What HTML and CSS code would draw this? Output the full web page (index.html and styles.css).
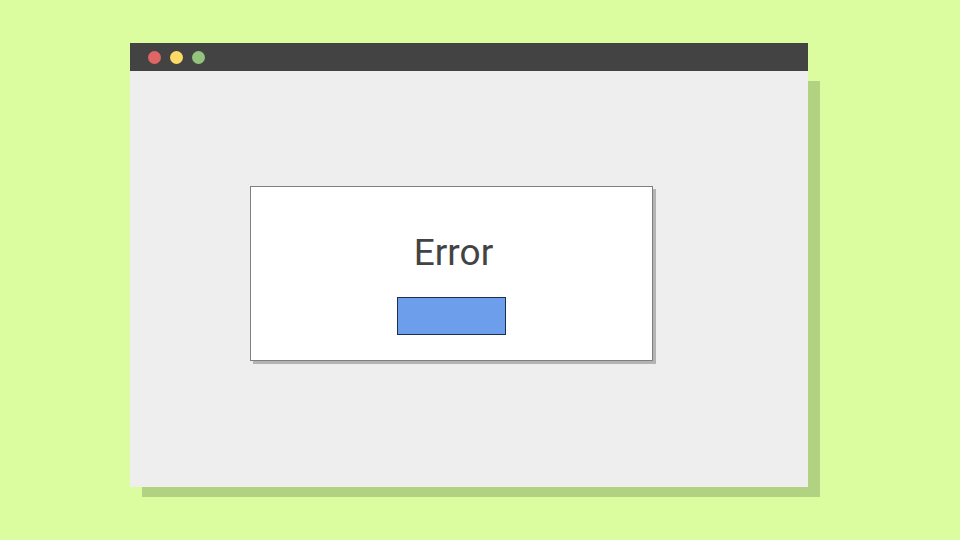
FILE: index.html
```html
<!DOCTYPE html>
<html>
<head>
<meta charset="utf-8">
<link rel="stylesheet" href="styles.css">
</head>
<body>
<div class="window">
  <div class="titlebar">
    <span class="dot red"></span>
    <span class="dot yellow"></span>
    <span class="dot green"></span>
  </div>
  <div class="content">
    <div class="dialog">
      <div class="title">Error</div>
      <div class="button"></div>
    </div>
  </div>
</div>
</body>
</html>
```
FILE: styles.css
```css
html, body {
  margin: 0;
  padding: 0;
}
body {
  width: 960px;
  height: 540px;
  background: #dbfd9f;
  padding: 43px 0 0 130px;
  box-sizing: border-box;
  font-family: Roboto, "Liberation Sans", sans-serif;
  overflow: hidden;
}
.window {
  position: relative;
  width: 678px;
  display: flex;
  flex-direction: column;
}
.window::before {
  content: "";
  position: absolute;
  left: 12px;
  top: 38px;
  width: 678px;
  height: 416px;
  background: #b1d281;
  z-index: 0;
}
.titlebar {
  position: relative;
  z-index: 1;
  height: 28px;
  background: #434343;
  display: flex;
  align-items: center;
  padding-left: 18px;
  gap: 9px;
}
.dot {
  width: 13px;
  height: 13px;
  border-radius: 50%;
  display: block;
}
.red { background: #e06666; }
.yellow { background: #ffd966; }
.green { background: #93c47d; }
.content {
  position: relative;
  z-index: 1;
  height: 416px;
  background: #eeeeee;
  padding: 115px 0 0 120px;
  box-sizing: border-box;
}
.dialog {
  width: 401px;
  height: 125px;
  border: 1px solid #7f7f7f;
  background: #ffffff;
  box-shadow: 3px 3px 0 #b3b3b3;
  padding-top: 48px;
  box-sizing: content-box;
  display: flex;
  flex-direction: column;
  align-items: center;
}
.title {
  font-size: 37px;
  line-height: 36px;
  color: #434343;
  margin-left: 4px;
}
.button {
  margin-top: 26px;
  width: 107px;
  height: 36px;
  background: #6d9eeb;
  border: 1px solid #1c2f4f;
}
```
